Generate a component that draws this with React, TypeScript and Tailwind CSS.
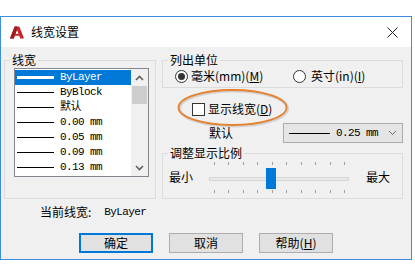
import React from "react";

const cjk = "font-['Noto_Sans_CJK_SC','Microsoft_YaHei',sans-serif]";
const mono = "font-['Liberation_Mono','Noto_Sans_CJK_SC',monospace]";

const rows = [
  { label: "ByLayer", selected: true },
  { label: "ByBlock" },
  { label: "默认" },
  { label: "0.00 mm" },
  { label: "0.05 mm" },
  { label: "0.09 mm" },
  { label: "0.13 mm" },
];

function AcadLogo() {
  return (
    <svg width="14" height="13" viewBox="0 0 15 13">
      <polygon points="5,0 10,0 15,13 11,13 7.5,3.5 4,13 0,13" fill="#c8242b" />
      <polygon points="5,0 7.5,0 7.5,3.5 4,13 0,13" fill="#9c1a20" />
      <rect x="5" y="8" width="5" height="2" fill="#c8242b" />
    </svg>
  );
}

function Chevron({ up }: { up?: boolean }) {
  return (
    <svg width="9" height="6" viewBox="0 0 9 6">
      <polyline
        points={up ? "1,5 4.5,1.5 8,5" : "1,1 4.5,4.5 8,1"}
        fill="none"
        stroke="#606060"
        strokeWidth="1.6"
      />
    </svg>
  );
}

function Ticks() {
  return (
    <div className="flex justify-between pl-[5px] pr-[4px]">
      {Array.from({ length: 10 }).map((_, i) => (
        <span key={i} className="block w-[1px] h-[3px] bg-[#a0a0a0]" />
      ))}
    </div>
  );
}

export default function App() {
  return (
    <div className={`w-[415px] h-[273px] bg-white pt-[16px] ${cjk} text-[12px] text-black`}>
      <div className="w-[412px] border border-[#3c8fde] bg-[#f0f0f0]">
        {/* title bar */}
        <div className="h-[30px] bg-white flex items-center pl-[9px] pr-[13px]">
          <AcadLogo />
          <span className="ml-[7px] text-[12px] leading-[14px]">线宽设置</span>
          <svg className="ml-auto" width="11" height="11" viewBox="0 0 11 11">
            <path d="M0.5 0.5 L10.5 10.5 M10.5 0.5 L0.5 10.5" stroke="#222" strokeWidth="1" />
          </svg>
        </div>

        {/* body */}
        <div className="pt-[5px] pb-[6px]">
          <div className="flex pl-[3px] gap-[6px]">
            {/* left group */}
            <fieldset className="w-[152px] h-[147px] border border-[#dcdcdc]">
              <legend className="ml-[5px] px-[2px] leading-[16px]">线宽</legend>
              <div className="ml-[9px] w-[135px] h-[109px] border border-[#828790] bg-white flex">
                <div className="flex-1 pt-[1px]">
                  {rows.map((r) => (
                    <div
                      key={r.label}
                      className={`h-[15px] flex items-center ${r.selected ? "bg-[#0078d7] text-white" : ""}`}
                    >
                      <span
                        className={`ml-[2px] w-[37px] ${r.selected ? "h-[3px] bg-white" : "h-[1px] bg-black"}`}
                      />
                      <span className={`ml-[6px] ${mono} text-[11px] tracking-[-0.6px] leading-[15px]`}>
                        {r.label}
                      </span>
                    </div>
                  ))}
                </div>
                <div className="w-[17px] bg-[#f0f0f0] flex flex-col items-center">
                  <div className="h-[17px] flex items-center justify-center">
                    <Chevron up />
                  </div>
                  <div className="w-[15px] h-[18px] bg-[#cdcdcd]" />
                  <div className="flex-1" />
                  <div className="h-[17px] flex items-center justify-center">
                    <Chevron />
                  </div>
                </div>
              </div>
            </fieldset>

            {/* right column */}
            <div className="w-[241px] flex flex-col">
              <fieldset className="h-[36px] border border-[#dcdcdc]">
                <legend className="ml-[5px] px-[2px] leading-[16px]">列出单位</legend>
                <div className="flex items-center h-[16px]">
                  <div className="w-[130px] flex items-center pl-[12px]">
                    <span className="w-[13px] h-[13px] rounded-full border border-[#333] bg-white flex items-center justify-center">
                      <span className="w-[7px] h-[7px] rounded-full bg-[#333]" />
                    </span>
                    <span className="ml-[3px] leading-[14px]">
                      毫米(mm)(<span className="underline">M</span>)
                    </span>
                  </div>
                  <div className="flex items-center">
                    <span className="w-[13px] h-[13px] rounded-full border border-[#333] bg-white" />
                    <span className="ml-[5px] leading-[14px]">
                      英寸(in)(<span className="underline">I</span>)
                    </span>
                  </div>
                </div>
              </fieldset>

              <div className="relative mt-[13px] h-[16px] flex items-center pl-[30px]">
                <span className="w-[13px] h-[13px] border border-[#333] bg-white" />
                <span className="ml-[3px] leading-[14px]">
                  显示线宽(<span className="underline">D</span>)
                </span>
                <svg
                  className="absolute left-[15px] top-[-13px] pointer-events-none"
                  width="112"
                  height="40"
                  viewBox="0 0 112 40"
                >
                  <ellipse cx="56.5" cy="20.5" rx="54" ry="17.5" fill="none" stroke="#000" strokeOpacity="0.12" strokeWidth="3" />
                  <ellipse cx="55.5" cy="19.5" rx="54" ry="17.5" fill="none" stroke="#e6812e" strokeWidth="1.8" />
                </svg>
              </div>

              <div className="mt-[6px] h-[20px] flex items-center">
                <span className="ml-[47px] leading-[14px]">默认</span>
                <div className="ml-auto w-[120px] h-[20px] border border-[#adadad] bg-[#e5e5e5] flex items-center pl-[5px] pr-[5px]">
                  <span className="w-[41px] h-[1px] bg-black" />
                  <span className={`ml-[6px] ${mono} text-[11px] tracking-[-0.6px]`}>0.25 mm</span>
                  <svg className="ml-auto" width="9" height="6" viewBox="0 0 9 6">
                    <polyline points="1,1 4.5,4.5 8,1" fill="none" stroke="#707070" strokeWidth="1" />
                  </svg>
                </div>
              </div>

              <fieldset className="mt-[2px] h-[54px] border border-[#dcdcdc]">
                <legend className="ml-[5px] px-[2px] leading-[16px]">调整显示比例</legend>
                <div className="flex items-center pl-[6px]">
                  <span className="leading-[14px]">最小</span>
                  <div className="ml-[16px] w-[140px] pt-[1px]">
                    <Ticks />
                    <div className="relative mt-[3px] h-[21px] flex items-center">
                      <div className="w-full h-[4px] bg-[#e7eaea] border border-[#d6d6d6]" />
                      <div className="absolute left-[57px] top-0 w-[10px] h-[21px] bg-[#0078d7]" />
                    </div>
                    <div className="mt-[1px]">
                      <Ticks />
                    </div>
                  </div>
                  <span className="ml-[17px] leading-[14px]">最大</span>
                </div>
              </fieldset>
            </div>
          </div>

          <div className="mt-[6px] h-[14px] flex items-center pl-[39px]">
            <span className="leading-[14px]">当前线宽:</span>
            <span className={`ml-[13px] ${mono} text-[11px] tracking-[-0.6px]`}>ByLayer</span>
          </div>

          <div className="mt-[14px] flex justify-center gap-[16px]">
            <button className="w-[74px] h-[20px] border-2 border-[#0078d7] bg-[#e1e1e1] leading-[14px]">
              确定
            </button>
            <button className="w-[74px] h-[20px] border border-[#adadad] bg-[#e1e1e1] leading-[14px]">
              取消
            </button>
            <button className="w-[74px] h-[20px] border border-[#adadad] bg-[#e1e1e1] leading-[14px]">
              帮助(<span className="underline">H</span>)
            </button>
          </div>
        </div>
      </div>
    </div>
  );
}
